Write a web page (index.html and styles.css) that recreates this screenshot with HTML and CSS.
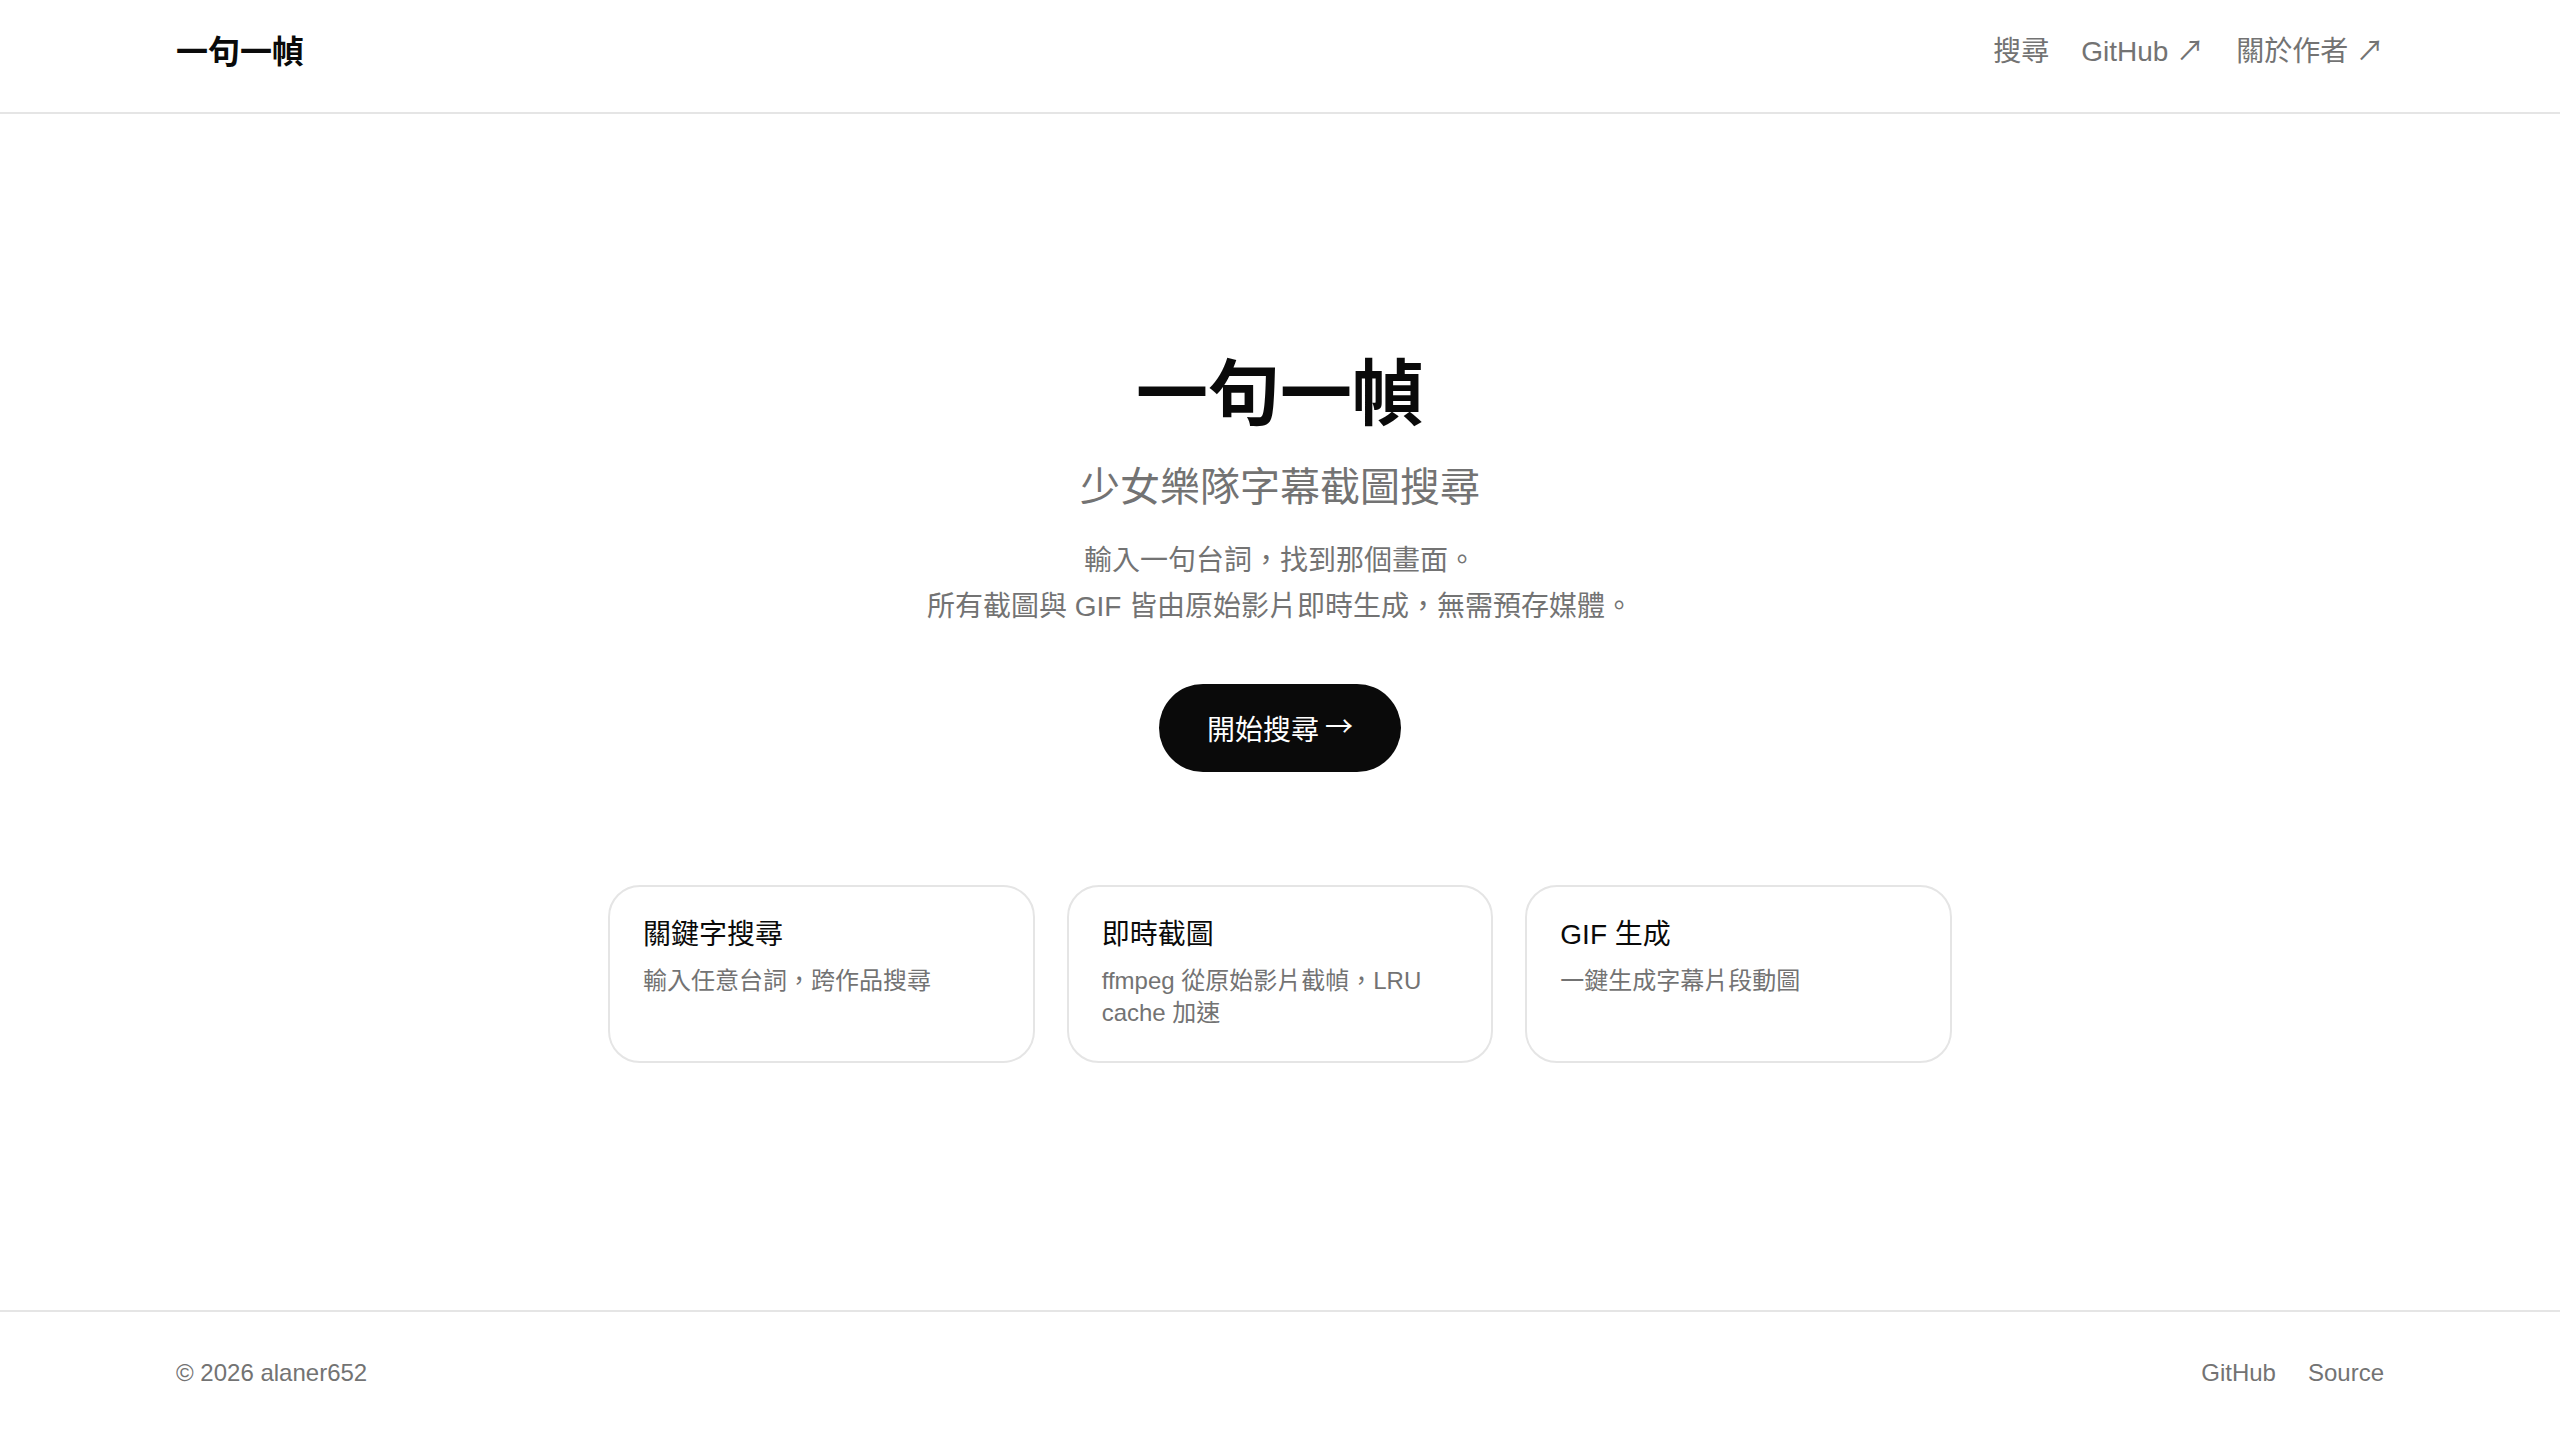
FILE: index.html
```html
<!DOCTYPE html>
<html lang="zh-Hant">
<head>
<meta charset="utf-8">
<title>一句一幀</title>
<link rel="stylesheet" href="styles.css">
</head>
<body>
<header class="site-header">
  <div class="container header-inner">
    <a class="logo" href="#">一句一幀</a>
    <nav class="nav">
      <a href="#">搜尋</a>
      <a href="#">GitHub ↗</a>
      <a href="#">關於作者 ↗</a>
    </nav>
  </div>
</header>
<main class="main">
  <section class="hero">
    <h1 class="title">一句一幀</h1>
    <p class="subtitle">少女樂隊字幕截圖搜尋</p>
    <p class="desc">輸入一句台詞，找到那個畫面。<br>所有截圖與 GIF 皆由原始影片即時生成，無需預存媒體。</p>
    <a class="cta" href="#">開始搜尋 <span class="arrow">→</span></a>
  </section>
  <section class="features">
    <div class="card">
      <h3 class="card-title">關鍵字搜尋</h3>
      <p class="card-text">輸入任意台詞，跨作品搜尋</p>
    </div>
    <div class="card">
      <h3 class="card-title">即時截圖</h3>
      <p class="card-text">ffmpeg 從原始影片截幀，LRU cache 加速</p>
    </div>
    <div class="card">
      <h3 class="card-title">GIF 生成</h3>
      <p class="card-text">一鍵生成字幕片段動圖</p>
    </div>
  </section>
</main>
<footer class="site-footer">
  <div class="container footer-inner">
    <span class="copy">© 2026 alaner652</span>
    <nav class="footer-links">
      <a href="#">GitHub</a>
      <a href="#">Source</a>
    </nav>
  </div>
</footer>
</body>
</html>
```
FILE: styles.css
```css
* { box-sizing: border-box; }
html, body { margin: 0; padding: 0; }
body {
  min-height: 100vh;
  display: flex;
  flex-direction: column;
  background: #ffffff;
  color: #0a0a0a;
  font-family: "Liberation Sans", "Noto Sans CJK TC", "Noto Sans CJK SC", sans-serif;
}
a { color: inherit; text-decoration: none; }
.container {
  width: 2208px;
  margin: 0 auto;
}
.site-header {
  height: 114px;
  border-bottom: 2px solid #e5e5e5;
}
.header-inner {
  height: 100%;
  display: flex;
  align-items: center;
  justify-content: space-between;
  padding-bottom: 14px;
}
.logo {
  font-size: 32px;
  font-weight: 700;
  color: #0a0a0a;
}
.nav {
  display: flex;
  align-items: baseline;
  gap: 32px;
  font-size: 28px;
  color: #737373;
}
.main {
  flex: 1;
  display: flex;
  flex-direction: column;
  align-items: center;
  justify-content: center;
  padding-bottom: 10px;
}
.hero {
  text-align: center;
  display: flex;
  flex-direction: column;
  align-items: center;
}
.title {
  margin: 0;
  font-size: 72px;
  line-height: 86px;
  font-weight: 700;
  color: #0a0a0a;
}
.subtitle {
  margin: 22px 0 0;
  font-size: 40px;
  line-height: 56px;
  color: #737373;
}
.desc {
  margin: 23px 0 0;
  font-size: 28px;
  line-height: 46px;
  color: #737373;
}
.cta {
  margin-top: 54px;
  height: 88px;
  padding: 0 48px;
  display: inline-flex;
  align-items: center;
  gap: 6px;
  border-radius: 44px;
  background: #0a0a0a;
  color: #ffffff;
  font-size: 28px;
}
.arrow {
  font-family: "Noto Sans CJK TC", sans-serif;
  position: relative;
  top: -3px;
}
.features {
  margin-top: 113px;
  width: 1344px;
  display: grid;
  grid-template-columns: repeat(3, 1fr);
  gap: 32px;
}
.card {
  border: 2px solid #e5e5e5;
  border-radius: 32px;
  padding: 28px 33px 29px;
  min-height: 178px;
}
.card-title {
  margin: 0;
  font-size: 28px;
  line-height: 40px;
  font-weight: 400;
  color: #0a0a0a;
}
.card-text {
  margin: 10px 0 0;
  font-size: 24px;
  line-height: 32px;
  color: #737373;
}
.site-footer {
  border-top: 2px solid #e5e5e5;
  padding: 45px 0 51px;
}
.footer-inner {
  display: flex;
  justify-content: space-between;
  align-items: center;
  font-size: 24px;
  line-height: 32px;
  color: #737373;
}
.footer-links {
  display: flex;
  gap: 32px;
}
```
